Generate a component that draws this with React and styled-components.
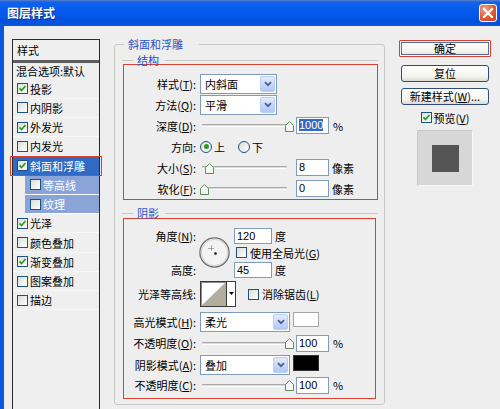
import React from "react";
import styled, { createGlobalStyle } from "styled-components";

const GlobalStyle = createGlobalStyle`
  html, body {
    margin: 0;
    padding: 0;
    background: #eeeeee;
  }
  body {
    font-family: "Noto Sans CJK SC", "Noto Sans", sans-serif;
    font-size: 11px;
    line-height: 14px;
    color: #000;
  }
  * {
    box-sizing: border-box;
  }
`;

const Window = styled.div`
  width: 500px;
  height: 409px;
  display: flex;
  flex-direction: column;
  overflow: hidden;
  background: #0a55de;
`;

const TitleBar = styled.div`
  height: 26px;
  flex: none;
  display: flex;
  align-items: center;
  justify-content: space-between;
  padding: 0 3px 0 7px;
  background: linear-gradient(#5a7fc4 0px, #1461e8 2px, #0a60f0 5px, #0558ea 13px, #0152df 21px, #0b55d8 26px);
  color: #fff;
  font-weight: bold;
  font-size: 12px;
  text-shadow: 1px 1px 0 #0b2f8f;
`;

const CloseButton = styled.div`
  width: 18px;
  height: 18px;
  border: 1px solid #fff;
  border-radius: 3px;
  background: radial-gradient(circle at 30% 25%, #f1a085, #e05a33 55%, #c5421d);
  display: flex;
  align-items: center;
  justify-content: center;
`;

const Frame = styled.div`
  flex: 1;
  min-height: 0;
  display: flex;
  align-items: flex-start;
  margin: 0 0 0 4px;
  padding: 13px 9px 0 8px;
  background: #eeeeee;
`;

/* ---- left style list ---- */

const StyleList = styled.div`
  width: 88px;
  height: 380px;
  flex: none;
  border: 1px solid #2b2b2b;
  background: #efefef;
`;

const ListHeader = styled.div`
  height: 23px;
  padding-left: 4px;
  line-height: 20px;
  border-bottom: 3px solid #5c5c5c;
`;

const BlendRow = styled.div`
  height: 16.4px;
  padding-left: 3px;
  line-height: 16px;
  white-space: nowrap;
`;

const Item = styled.div`
  position: relative;
  height: 19.25px;
  display: flex;
  align-items: center;
  gap: 2px;
  white-space: nowrap;
  padding-left: ${(p) => (p.$sub ? 5 : 4)}px;
  margin-left: ${(p) => (p.$sub ? 12 : 0)}px;
  border-bottom: 1px solid ${(p) => (p.$sub ? "#ffffff" : "#f8f8f8")};
  background: ${(p) => (p.$selected ? "#316ac5" : p.$sub ? "#8aa4d7" : "transparent")};
  color: ${(p) => (p.$selected || p.$sub ? "#fff" : "#000")};

  ${(p) =>
    p.$selected &&
    `
    &::after {
      content: "";
      position: absolute;
      left: -3px;
      right: -3px;
      top: 0;
      bottom: -1px;
      border: 1px solid #d8412f;
    }
  `}
`;

const Box = styled.span`
  width: 11px;
  height: 11px;
  flex: none;
  border: 1px solid #1c5180;
  background: linear-gradient(135deg, #dcdcd7, #ffffff);
  display: inline-flex;
  align-items: center;
  justify-content: center;
`;

const Check = ({ on }) => (
  <Box>
    {on && (
      <svg width="9" height="9" viewBox="0 0 9 9">
        <polyline points="1.5,4.3 3.5,6.5 7.5,2" fill="none" stroke="#21a121" strokeWidth="1.8" />
      </svg>
    )}
  </Box>
);

/* ---- group boxes ---- */

const Group = styled.fieldset`
  width: 271px;
  flex: none;
  margin: 1px 0 0 14px;
  padding: 0 6px 5px 7px;
  border: 1px solid #c9c9c3;
  border-radius: 3px;
  min-width: 0;
`;

const Legend = styled.legend`
  color: #1f55c7;
  line-height: 8px;
  margin-left: ${(p) => p.$ml}px;
  padding: 0 ${(p) => p.$pr}px 0 4px;
`;

const SubGroup = styled.fieldset`
  margin: ${(p) => p.$mt}px 0 0;
  padding: 0;
  border: none;
  border-top: 1px solid #c9c9c3;
  min-width: 0;
`;

const Marked = styled.div`
  margin: ${(p) => p.$mt || 0}px ${(p) => p.$mr || 0}px 0 1px;
  padding: ${(p) => p.$pt}px 0 ${(p) => p.$pb || 0}px;
  border: 1px solid #d8412f;
`;

const Row = styled.div`
  display: flex;
  align-items: center;
  height: ${(p) => p.$h || 21}px;
  margin-top: ${(p) => p.$mt || 0}px;
  white-space: nowrap;
`;

const Label = styled.span`
  width: 72px;
  flex: none;
  margin-right: 4px;
  text-align: right;
  white-space: nowrap;
`;

const Key = styled.u`
  text-decoration: underline;
  text-underline-offset: 1px;
`;

const SelectBox = styled.div`
  width: ${(p) => p.$w}px;
  height: 20px;
  flex: none;
  display: flex;
  align-items: center;
  padding: 1px 1px 1px 4px;
  border: 1px solid #7f9db9;
  background: #fff;
`;

const SelectText = styled.span`
  flex: 1;
`;

const DropButton = styled.span`
  width: 15px;
  height: 100%;
  border: 1px solid #bacdf4;
  border-radius: 2px;
  background: linear-gradient(#e4ecfd, #c4d5fb 60%, #b3c7f6);
  display: flex;
  align-items: center;
  justify-content: center;
`;

const Select = ({ w, children }) => (
  <SelectBox $w={w}>
    <SelectText>{children}</SelectText>
    <DropButton>
      <svg width="8" height="6" viewBox="0 0 8 6">
        <polyline points="1,1.2 4,4.2 7,1.2" fill="none" stroke="#4d6185" strokeWidth="1.8" />
      </svg>
    </DropButton>
  </SelectBox>
);

const SliderWrap = styled.div`
  position: relative;
  width: 92px;
  height: 14px;
  flex: none;
  display: flex;
  align-items: center;
`;

const Track = styled.div`
  width: 85px;
  height: 3px;
  margin-left: 2px;
  border-top: 1px solid #a9a9a9;
  border-bottom: 1px solid #ffffff;
  background: #dcdcdc;
  border-radius: 1px;
`;

const Thumb = styled.svg`
  position: absolute;
  top: 2px;
`;

const Slider = ({ at }) => (
  <SliderWrap>
    <Track />
    <Thumb width="9" height="11" viewBox="0 0 9 11" style={{ left: at - 4.5 }}>
      <path d="M0.5 4.5 L4.5 0.7 L8.5 4.5 V10.5 H0.5 Z" fill="#f7f7f7" stroke="#5a8d5a" />
    </Thumb>
  </SliderWrap>
);

const Field = styled.div`
  width: ${(p) => p.$w || 33}px;
  height: ${(p) => p.$h || 17}px;
  flex: none;
  margin-left: ${(p) => (p.$ml === undefined ? 4 : p.$ml)}px;
  padding: 0 2px;
  border: 1px solid #7f9db9;
  background: #fff;
  font-family: "Liberation Sans", Arial, sans-serif;
  font-size: 11px;
  line-height: ${(p) => (p.$h || 17) - 2}px;
`;

const Selected = styled.span`
  background: #316ac5;
  color: #fff;
`;

const Unit = styled.span`
  margin-left: ${(p) => p.$ml || 4}px;
`;

const Radio = styled.span`
  width: 12px;
  height: 12px;
  flex: none;
  border-radius: 50%;
  border: 1px solid #1c5180;
  background: linear-gradient(135deg, #dcdcd7, #ffffff);
  display: inline-flex;
  align-items: center;
  justify-content: center;

  &::after {
    content: "";
    width: 5px;
    height: 5px;
    border-radius: 50%;
    background: ${(p) => (p.$on ? "#21a121" : "transparent")};
  }
`;

const RadioText = styled.span`
  margin: 0 ${(p) => p.$mr || 0}px 0 2px;
`;

const AngleGrid = styled.div`
  display: grid;
  grid-template-columns: 76px 34px auto;
  grid-template-rows: repeat(3, 17px);
  align-items: center;
`;

const Cell = styled.div`
  grid-column: 3;
  grid-row: ${(p) => p.$row};
  display: flex;
  align-items: center;
  white-space: nowrap;
`;

const GridLabel = styled(Label)`
  grid-column: 1;
  grid-row: ${(p) => p.$row};
`;

const Dial = styled.svg`
  grid-column: 2;
  grid-row: 1 / 4;
  margin-left: -1px;
`;

const CheckLabel = styled.span`
  margin-left: ${(p) => p.$ml || 3}px;
`;

const GlobalLight = styled.span`
  display: flex;
  margin-left: 2px;
`;

const ContourBox = styled.div`
  width: 36px;
  height: 26px;
  flex: none;
  display: flex;
  border: 1px solid #3a3a3a;
  background: #fff;
  margin-right: 12px;
`;

const ContourArrow = styled.div`
  flex: 1;
  border-left: 1px solid #3a3a3a;
  display: flex;
  align-items: center;
  justify-content: center;
  padding-bottom: 2px;
`;

const Swatch = styled.div`
  width: 26px;
  height: ${(p) => p.$h}px;
  flex: none;
  align-self: flex-start;
  margin: 1px 0 0 3px;
  border: 1px solid ${(p) => p.$edge};
  background: ${(p) => p.$color};
`;

/* ---- right column ---- */

const Side = styled.div`
  width: 92px;
  flex: none;
  margin: 1px 0 0 14px;
  display: flex;
  flex-direction: column;
  align-items: center;
`;

const Button = styled.div`
  width: ${(p) => (p.$primary ? 92 : 88)}px;
  height: 17px;
  margin-top: ${(p) => p.$mt || 0}px;
  border: 1px solid ${(p) => (p.$primary ? "#d8412f" : "#2f4d78")};
  border-radius: ${(p) => (p.$primary ? 1 : 3)}px;
  background: linear-gradient(#ffffff, #f3f3ee 70%, #dcd9d0);
  box-shadow: ${(p) => (p.$primary ? "inset 0 0 0 1px #f4f4f4, inset 0 0 0 2px #55709e" : "none")};
  text-align: center;
  line-height: 15px;
  white-space: nowrap;
`;

const PreviewCheck = styled.div`
  height: 13px;
  margin-top: 6px;
  display: flex;
  align-items: center;
`;

const Preview = styled.div`
  width: 56px;
  height: 56px;
  margin-top: 6px;
  display: flex;
  align-items: center;
  justify-content: center;
  background: #d7d7d7;
  border-top: 1px solid #c6c6c6;
  border-left: 1px solid #c6c6c6;
  border-right: 1px solid #f8f8f8;
  border-bottom: 1px solid #f8f8f8;
`;

const PreviewSquare = styled.div`
  width: 27px;
  height: 27px;
  background: #555555;
`;

const items = [
  { t: "投影", c: true },
  { t: "内阴影" },
  { t: "外发光", c: true },
  { t: "内发光" },
  { t: "斜面和浮雕", c: true, sel: true },
  { t: "等高线", sub: true },
  { t: "纹理", sub: true },
  { t: "光泽", c: true },
  { t: "颜色叠加" },
  { t: "渐变叠加", c: true },
  { t: "图案叠加" },
  { t: "描边" },
];

export default function App() {
  return (
    <>
      <GlobalStyle />
      <Window>
        <TitleBar>
          <span>图层样式</span>
          <CloseButton>
            <svg width="16" height="16" viewBox="0 0 16 16">
              <path d="M4 4 L12 12 M12 4 L4 12" stroke="#fff" strokeWidth="2.2" strokeLinecap="square" />
            </svg>
          </CloseButton>
        </TitleBar>

        <Frame>
          <StyleList>
            <ListHeader>样式</ListHeader>
            <BlendRow>混合选项:默认</BlendRow>
            {items.map((it) => (
              <Item key={it.t} $selected={it.sel} $sub={it.sub}>
                <Check on={it.c} />
                {it.t}
              </Item>
            ))}
          </StyleList>

          <Group>
            <Legend $ml={2} $pr={16}>斜面和浮雕</Legend>

            <SubGroup $mt={8}>
              <Legend $ml={11} $pr={6}>结构</Legend>
              <Marked $pt={8}>
                <Row>
                  <Label>样式(<Key>T</Key>):</Label>
                  <Select w={77}>内斜面</Select>
                </Row>
                <Row>
                  <Label>方法(<Key>Q</Key>):</Label>
                  <Select w={77}>平滑</Select>
                </Row>
                <Row>
                  <Label>深度(<Key>D</Key>):</Label>
                  <Slider at={89} />
                  <Field><Selected>1000</Selected></Field>
                  <Unit>%</Unit>
                </Row>
                <Row>
                  <Label>方向:</Label>
                  <Radio $on />
                  <RadioText $mr={13}>上</RadioText>
                  <Radio />
                  <RadioText>下</RadioText>
                </Row>
                <Row>
                  <Label>大小(<Key>S</Key>):</Label>
                  <Slider at={9} />
                  <Field>8</Field>
                  <Unit $ml={3}>像素</Unit>
                </Row>
                <Row>
                  <Label>软化(<Key>F</Key>):</Label>
                  <Slider at={4} />
                  <Field>0</Field>
                  <Unit $ml={3}>像素</Unit>
                </Row>
              </Marked>
            </SubGroup>

            <SubGroup $mt={9}>
              <Legend $ml={11} $pr={6}>阴影</Legend>
              <Marked $mt={1} $mr={2} $pt={8} $pb={4}>
                <AngleGrid>
                  <GridLabel $row={1}>角度(<Key>N</Key>):</GridLabel>
                  <Dial width="31" height="31" viewBox="0 0 31 31">
                    <circle cx="15.5" cy="15.5" r="14.6" fill="#f3f3f3" stroke="#6f6f6f" strokeWidth="1.3" />
                    <circle cx="15.5" cy="15.5" r="13.2" fill="none" stroke="#d0d0d0" strokeWidth="1" />
                    <path d="M12.5 8.5 V14.5 M9.5 11.5 H15.5" stroke="#666" strokeWidth="1" strokeDasharray="1 1" />
                    <circle cx="16.5" cy="16.5" r="1.3" fill="#111" />
                  </Dial>
                  <Cell $row={1}>
                    <Field $w={38} $h={16} $ml={0}>120</Field>
                    <Unit $ml={3}>度</Unit>
                  </Cell>
                  <Cell $row={2}>
                    <GlobalLight>
                      <Check />
                    </GlobalLight>
                    <CheckLabel>使用全局光(<Key>G</Key>)</CheckLabel>
                  </Cell>
                  <GridLabel $row={3}>高度:</GridLabel>
                  <Cell $row={3}>
                    <Field $w={38} $h={16} $ml={0}>45</Field>
                    <Unit $ml={3}>度</Unit>
                  </Cell>
                </AngleGrid>

                <Row $h={26} $mt={3}>
                  <Label>光泽等高线:</Label>
                  <ContourBox>
                    <svg width="25" height="24" viewBox="0 0 25 24">
                      <polygon points="0,24 25,0 25,24" fill="#b3ad9f" />
                      <path d="M0.5 23.5 V0.5 H24.5" fill="none" stroke="#8a8a8a" strokeWidth="1" />
                    </svg>
                    <ContourArrow>
                      <svg width="5" height="3" viewBox="0 0 5 3">
                        <polygon points="0,0 5,0 2.5,3" fill="#000" />
                      </svg>
                    </ContourArrow>
                  </ContourBox>
                  <Check />
                  <CheckLabel>消除锯齿(<Key>L</Key>)</CheckLabel>
                </Row>

                <Row $h={22} $mt={4}>
                  <Label>高光模式(<Key>H</Key>):</Label>
                  <Select w={90}>柔光</Select>
                  <Swatch $h={15} $color="#ffffff" $edge="#a5a5a5" />
                </Row>
                <Row $h={18} $mt={1}>
                  <Label>不透明度(<Key>O</Key>):</Label>
                  <Slider at={89} />
                  <Field>100</Field>
                  <Unit>%</Unit>
                </Row>
                <Row $h={22} $mt={2}>
                  <Label>阴影模式(<Key>A</Key>):</Label>
                  <Select w={90}>叠加</Select>
                  <Swatch $h={16} $color="#000000" $edge="#333333" />
                </Row>
                <Row $h={18}>
                  <Label>不透明度(<Key>C</Key>):</Label>
                  <Slider at={89} />
                  <Field>100</Field>
                  <Unit>%</Unit>
                </Row>
              </Marked>
            </SubGroup>
          </Group>

          <Side>
            <Button $primary>确定</Button>
            <Button $mt={8}>复位</Button>
            <Button $mt={6}>新建样式(<Key>W</Key>)...</Button>
            <PreviewCheck>
              <Check on />
              <CheckLabel $ml={2}>预览(<Key>V</Key>)</CheckLabel>
            </PreviewCheck>
            <Preview>
              <PreviewSquare />
            </Preview>
          </Side>
        </Frame>
      </Window>
    </>
  );
}
